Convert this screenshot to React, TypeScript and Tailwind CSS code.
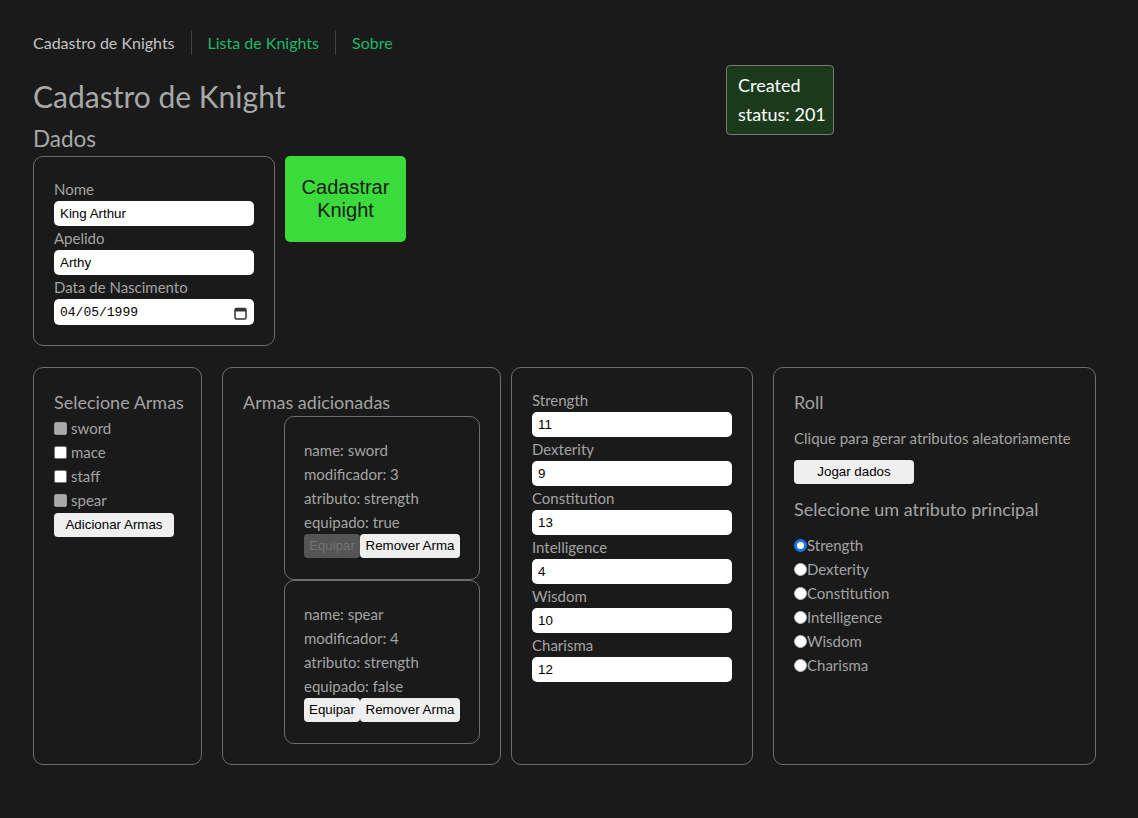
import React from "react";

const weapons = [
  { name: "sword", mod: 3, attr: "strength", equipped: true },
  { name: "spear", mod: 4, attr: "strength", equipped: false },
];

const attrs = [
  { label: "Strength", value: "11" },
  { label: "Dexterity", value: "9" },
  { label: "Constitution", value: "13" },
  { label: "Intelligence", value: "4" },
  { label: "Wisdom", value: "10" },
  { label: "Charisma", value: "12" },
];

const inputCls =
  "block w-[200px] h-[25px] rounded-[5px] bg-white px-[6px] text-[13.33px] text-black font-['Liberation_Sans',Arial,sans-serif] leading-[25px]";

const btnCls =
  "h-[24px] rounded-[4px] bg-[#efefef] whitespace-nowrap text-[13.33px] text-black font-['Liberation_Sans',Arial,sans-serif]";

function CalendarIcon() {
  return (
    <svg width="13" height="13" viewBox="0 0 13 13" fill="none">
      <rect x="1" y="1.5" width="11" height="10.5" rx="1.5" stroke="#333" strokeWidth="1.5" />
      <rect x="1" y="1.5" width="11" height="3" fill="#333" />
    </svg>
  );
}

export default function App() {
  return (
    <div className="relative min-h-screen bg-[#1a1a1a] px-[33px] pt-[31px] font-['Lato','Noto_Sans',sans-serif] text-[#a3a3a3]">
      {/* nav */}
      <nav className="flex h-[24px] items-center text-[16px]">
        <span className="pr-[16px] text-[#c4c4c4]">Cadastro de Knights</span>
        <span className="h-[24px] border-l border-[#444]" />
        <a className="px-[16px] text-[#1db868]">Lista de Knights</a>
        <span className="h-[24px] border-l border-[#444]" />
        <a className="pl-[16px] text-[#1db868]">Sobre</a>
      </nav>

      {/* toast */}
      <div className="absolute left-[726px] top-[65px] h-[70px] w-[108px] whitespace-nowrap rounded-[4px] border border-[#777] bg-[#1b3a1c] px-[11px] pt-[5px] text-[18px] leading-[29px] text-white">
        <div>Created</div>
        <div>status: 201</div>
      </div>

      <h1 className="mt-[21px] h-[40px] text-[30px] leading-[40px] text-[#a8a8a8]">Cadastro de Knight</h1>
      <h2 className="mt-[10px] h-[26px] text-[22.5px] leading-[26px] text-[#a8a8a8]">Dados</h2>

      <div className="mt-[4px] flex items-start gap-[10px]">
        <div className="w-[242px] rounded-[10px] border border-[#6e6e6e] px-[20px] py-[20px] text-[15px]">
          <label className="block h-[24px] leading-[24px]">Nome</label>
          <div className={inputCls}>King Arthur</div>
          <label className="block h-[24px] leading-[24px]">Apelido</label>
          <div className={inputCls}>Arthy</div>
          <label className="block h-[24px] leading-[24px]">Data de Nascimento</label>
          <div className="flex h-[26px] w-[200px] items-center justify-between rounded-[5px] bg-white pl-[6px] pr-[7px] pt-[2px] font-['Liberation_Mono',monospace] text-[13px] text-black">
            <span>04/05/1999</span>
            <CalendarIcon />
          </div>
        </div>
        <button className="h-[86px] w-[121px] rounded-[5px] bg-[#3adb3a] text-[20px] leading-[23px] text-[#1a1a1a] font-['Liberation_Sans',Arial,sans-serif]">
          Cadastrar
          <br />
          Knight
        </button>
      </div>

      {/* bottom row */}
      <div className="mt-[21px] flex items-stretch">
        {/* Selecione Armas */}
        <div className="h-[398px] w-[169px] rounded-[10px] border border-[#6e6e6e] px-[20px] pt-[20px] text-[15px]">
          <h3 className="h-[28px] whitespace-nowrap text-[18px] leading-[28px]">Selecione Armas</h3>
          {[
            { n: "sword", d: true },
            { n: "mace", d: false },
            { n: "staff", d: false },
            { n: "spear", d: true },
          ].map((w) => (
            <div key={w.n} className="flex h-[24px] items-center gap-[4px]">
              <span
                className={`inline-block h-[13px] w-[13px] rounded-[2px] border ${
                  w.d ? "border-[#999] bg-[#a9a9a9]" : "border-[#767676] bg-white"
                }`}
              />
              <span>{w.n}</span>
            </div>
          ))}
          <button className={btnCls + " w-[120px]"}>Adicionar Armas</button>
        </div>

        {/* Armas adicionadas */}
        <div className="ml-[20px] w-[279px] rounded-[10px] border border-[#6e6e6e] px-[20px] pt-[20px] text-[15px]">
          <h3 className="h-[28px] whitespace-nowrap text-[18px] leading-[28px]">Armas adicionadas</h3>
          <div className="ml-[41px]">
            {weapons.map((w) => (
              <div
                key={w.name}
                className="rounded-[10px] border border-[#6e6e6e] px-[19px] pb-[21px] pt-[21px]"
              >
                <div className="h-[24px] leading-[24px]">name: {w.name}</div>
                <div className="h-[24px] leading-[24px]">modificador: {w.mod}</div>
                <div className="h-[24px] leading-[24px]">atributo: {w.attr}</div>
                <div className="h-[24px] leading-[24px]">equipado: {w.equipped ? "true" : "false"}</div>
                <div className="flex">
                  <button
                    className={`h-[24px] w-[56px] rounded-[4px] text-[13.33px] font-['Liberation_Sans',Arial,sans-serif] ${
                      w.equipped ? "bg-[#555555] text-[#737373]" : "bg-[#efefef] text-black"
                    }`}
                  >
                    Equipar
                  </button>
                  <button className={btnCls + " w-[100px]"}>Remover Arma</button>
                </div>
              </div>
            ))}
          </div>
        </div>

        {/* Atributos */}
        <div className="ml-[10px] w-[242px] rounded-[10px] border border-[#6e6e6e] px-[20px] pt-[20px] text-[15px]">
          {attrs.map((a) => (
            <div key={a.label}>
              <label className="block h-[24px] leading-[24px]">{a.label}</label>
              <div className={inputCls}>{a.value}</div>
            </div>
          ))}
        </div>

        {/* Roll */}
        <div className="ml-[20px] w-[323px] rounded-[10px] border border-[#6e6e6e] px-[20px] pt-[20px] text-[15px]">
          <h3 className="h-[28px] text-[18px] leading-[28px]">Roll</h3>
          <p className="mt-[10px] h-[24px] whitespace-nowrap leading-[24px]">Clique para gerar atributos aleatoriamente</p>
          <button className={btnCls + " mt-[10px] w-[120px]"}>Jogar dados</button>
          <h3 className="mt-[11px] h-[28px] whitespace-nowrap text-[18px] leading-[28px]">Selecione um atributo principal</h3>
          <div className="mt-[10px]">
            {attrs.map((a, i) => (
              <div key={a.label} className="flex h-[24px] items-center">
                {i === 0 ? (
                  <span className="inline-block h-[13px] w-[13px] rounded-full border-[3.5px] border-[#1a73e8] bg-white" />
                ) : (
                  <span className="inline-block h-[13px] w-[13px] rounded-full border border-[#bbb] bg-white" />
                )}
                <span>{a.label}</span>
              </div>
            ))}
          </div>
        </div>
      </div>
    </div>
  );
}
